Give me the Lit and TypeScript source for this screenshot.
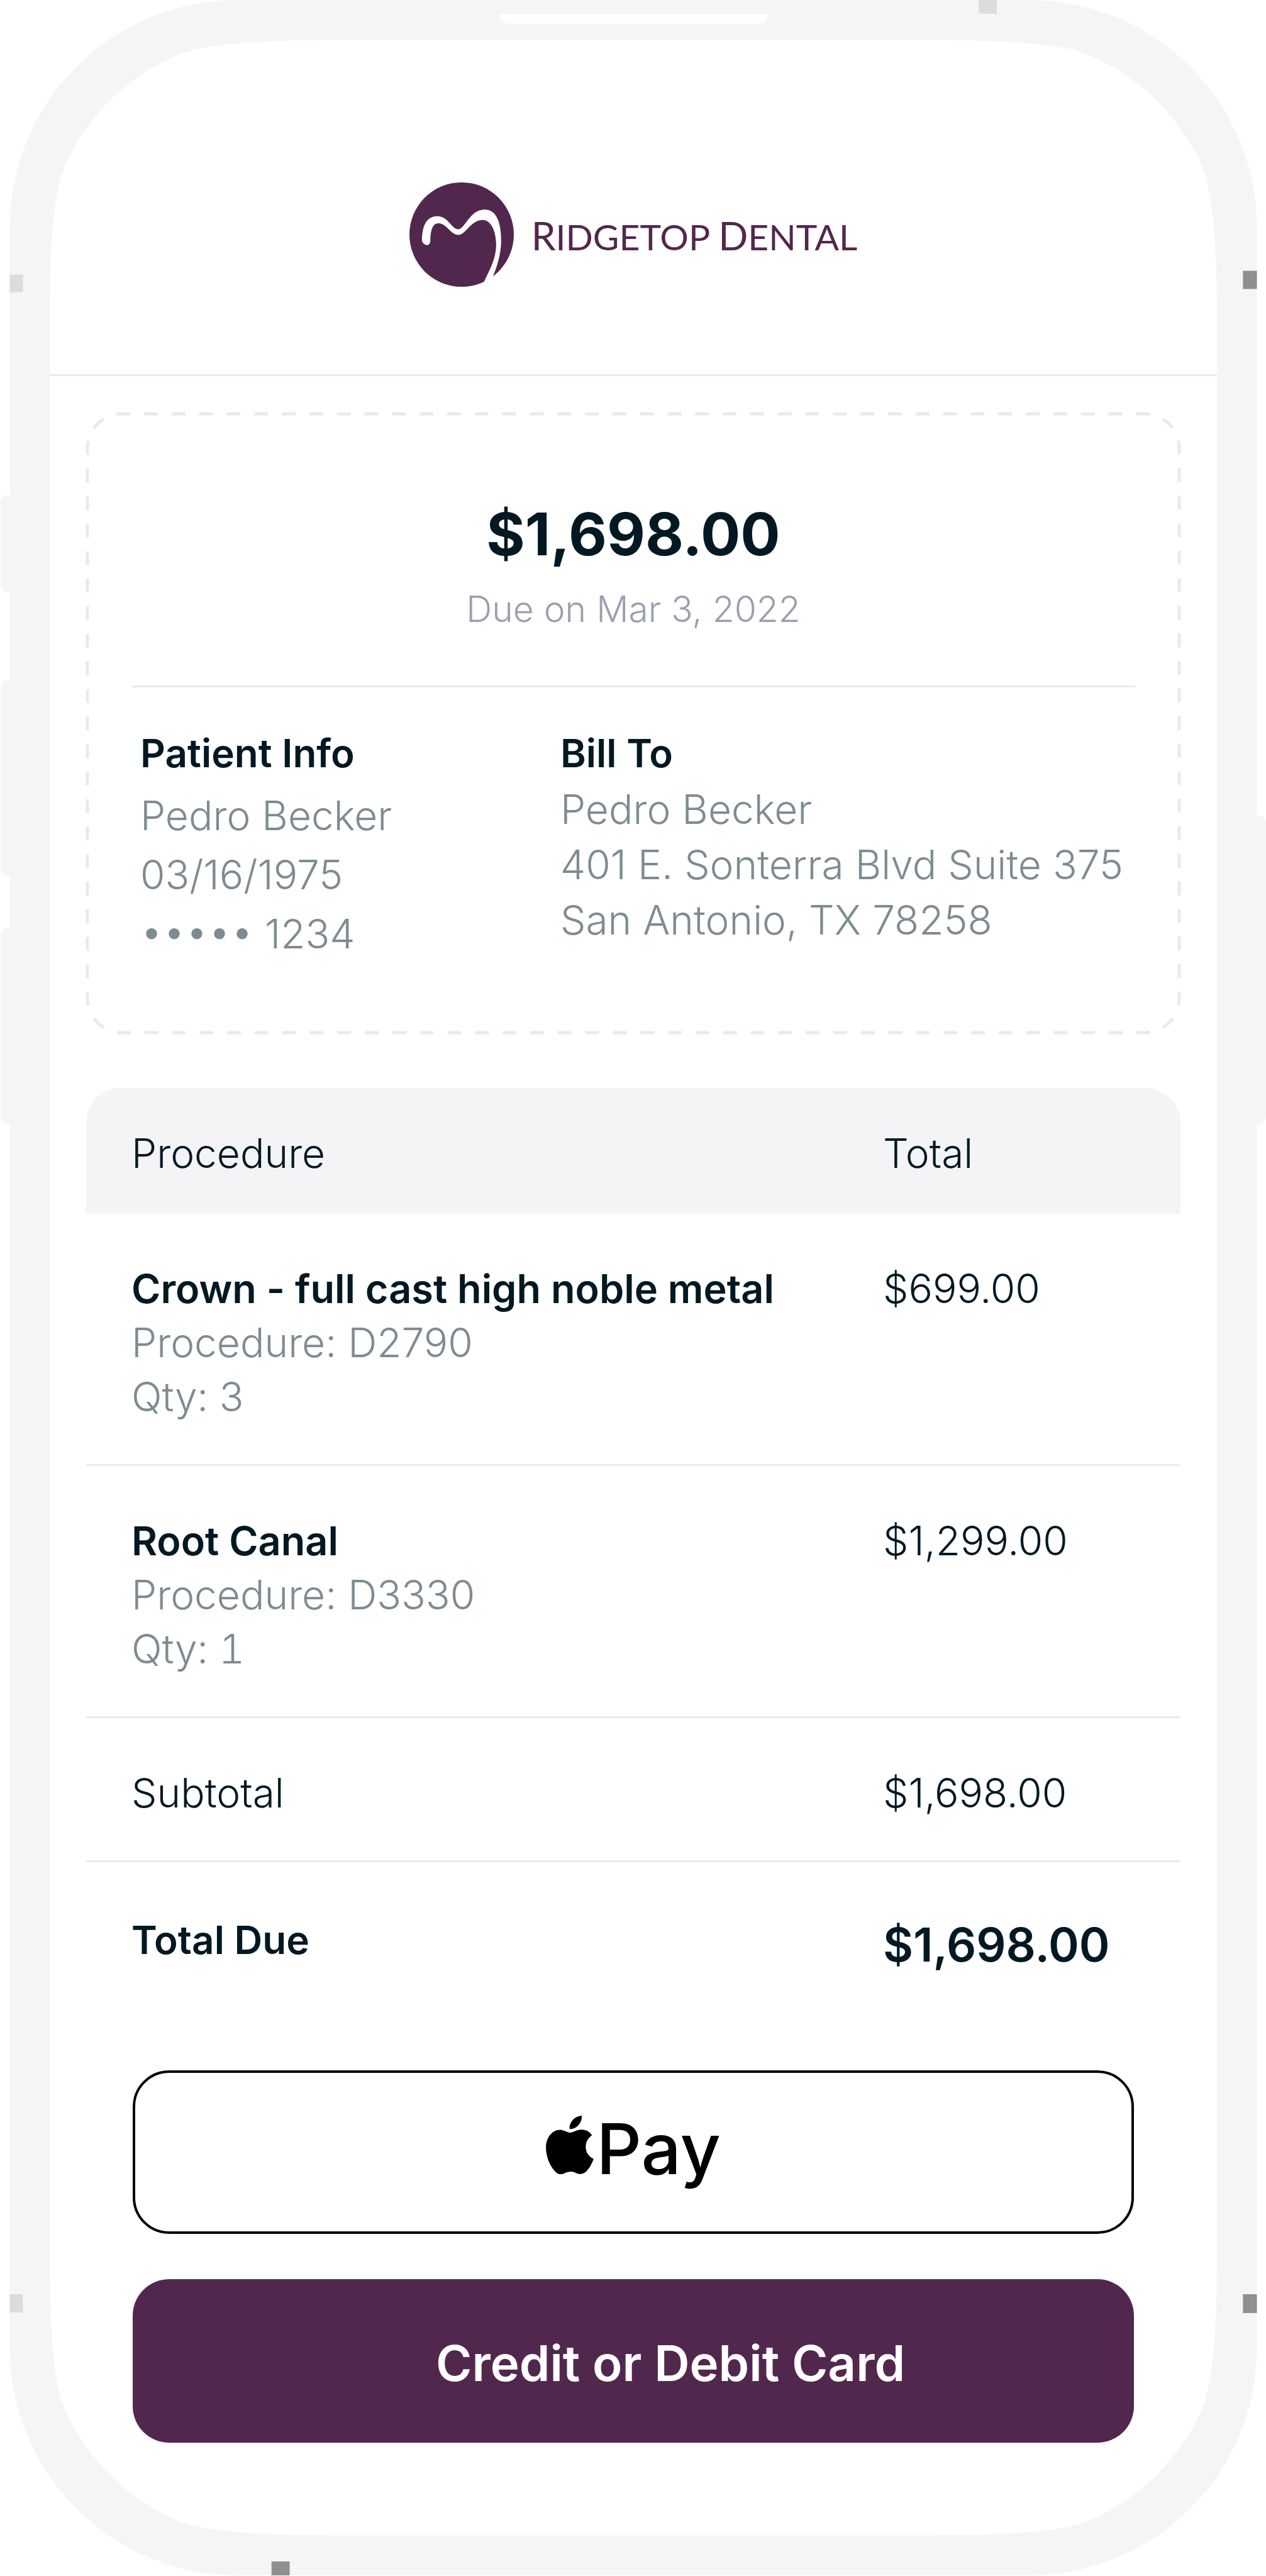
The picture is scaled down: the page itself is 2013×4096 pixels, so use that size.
import { LitElement, html, svg, css } from "lit";
import { customElement } from "lit/decorators.js";

interface Procedure {
  name: string;
  code: string;
  qty: number;
  total: string;
}

const PROCEDURES: Procedure[] = [
  { name: "Crown - full cast high noble metal", code: "D2790", qty: 3, total: "$699.00" },
  { name: "Root Canal", code: "D3330", qty: 1, total: "$1,299.00" },
];

const SCREEN_EDGE =
  "M82 540C82 390 88 310 113 260C150 188 214 121 302 87C348 72 430 66 560 66" +
  "H1530C1660 66 1742 72 1788 87C1876 121 1940 188 1977 260C2002 310 2008 390 2008 540" +
  "V3711C2008 3861 2002 3941 1977 3991C1940 4063 1876 4130 1788 4164C1742 4179 1660 4185 1530 4185" +
  "H560C430 4185 348 4179 302 4164C214 4130 150 4063 113 3991C88 3941 82 3861 82 3711Z";

/** The outline of the handset: side keys, body, earpiece and antenna bands. */
@customElement("phone-frame")
export class PhoneFrame extends LitElement {
  static styles = css`
    :host { display: block; }
    .art { display: block; width: 100%; height: 100%; }
    .key { fill: #f5f5f5; }
    .body { fill: #f5f5f5; }
    .screen { fill: #fff; }
    .band { fill: #dcdcdc; }
    .band-dark { fill: #8f8f8f; }
  `;

  render() {
    return html`
      <svg class="art" viewBox="0 0 2089 4251" preserveAspectRatio="none" aria-hidden="true">
        ${svg`
          <rect class="key" x="1" y="817" width="40" height="160" rx="12" />
          <rect class="key" x="1" y="1123" width="40" height="323" rx="12" />
          <rect class="key" x="1" y="1532" width="40" height="323" rx="12" />
          <rect class="key" x="2048" y="1347" width="41" height="508" rx="12" />
          <rect class="body" x="16" y="0" width="2058" height="4251" rx="376" />
          <path class="screen" d=${SCREEN_EDGE} />
          <path class="screen" d="M823 24H1267C1267 32 1262 39 1252 39H838C828 39 823 32 823 24Z" />
          <path class="band" d="M1615 0H1645V23L1615 22Z" />
          <path class="band" d="M16 453H38V482L16 483Z" />
          <path class="band" d="M16 3787H37L38 3817H16Z" />
          <path class="band-dark" d="M2051 447H2074V477H2051Z" />
          <path class="band-dark" d="M2051 3787H2074V3818H2051Z" />
          <path class="band-dark" d="M448 4228H478V4251H448Z" />
        `}
      </svg>
    `;
  }
}

@customElement("brand-logo")
export class BrandLogo extends LitElement {
  static styles = css`
    :host {
      display: flex;
      align-items: center;
      gap: 26px;
      color: #52274d;
    }
    .mark { display: block; width: 166px; height: 166px; }
    .disc { fill: #52274d; }
    .ridge { fill: #fff; }
    .name {
      font-family: Lato, "Open Sans", sans-serif;
      font-size: 57px;
      font-weight: 400;
      line-height: 72px;
      padding-top: 4px;
      padding-left: 2px;
      white-space: nowrap;
    }
    .initial { font-size: 62px; }
  `;

  render() {
    return html`
      <svg class="mark" viewBox="0 0 173 173" aria-hidden="true">
        <circle class="disc" cx="86.5" cy="86.5" r="86.5" />
        <path
          class="ridge"
          d="M20.8 96C20.8 80 24 56 46.7 56C64 56 70 77.7 81 77.7C92 77.7 100 45 124.8 45C146 45 152 70 152 97C152 120 144 143 137.7 157.7L137 178H116L123.3 166C132 146 143.7 128 143.7 103C143.7 85 137 62.3 121.3 62.3C102 62.3 93 87 81.5 87C68 87 62 67.7 47.7 67.7C37 67.7 34.7 84 34.7 97C34.7 101 32 104 29.5 104C25 104 20.8 100 20.8 96Z"
        />
      </svg>
      <span class="name"><span class="initial">R</span>IDGETOP <span class="initial">D</span>ENTAL</span>
    `;
  }
}

@customElement("bill-summary")
export class BillSummary extends LitElement {
  static styles = css`
    :host {
      display: block;
      position: relative;
      padding: 138px 72px 112px;
    }
    .outline {
      position: absolute;
      inset: 0;
      width: 100%;
      height: 100%;
      overflow: visible;
    }
    .dashes {
      x: 2px;
      y: 2px;
      width: calc(100% - 4px);
      height: calc(100% - 4px);
      fill: none;
      stroke: #e9eaee;
      stroke-width: 5px;
    }
    .amount {
      margin: 0;
      font-size: 94px;
      line-height: 110px;
      font-weight: 700;
      text-align: center;
    }
    .due {
      margin: 30px 0 0;
      font-size: 57px;
      line-height: 70px;
      text-align: center;
      color: #9aa0ae;
    }
    .rule {
      height: 3px;
      margin: 86px 0 0;
      border: 0;
      background: #e9eaee;
    }
    .parties {
      display: grid;
      grid-template-columns: 668fr 914fr;
      padding: 60px 0 0 14px;
    }
    .heading {
      margin: 0;
      font-size: 62px;
      line-height: 90px;
      font-weight: 600;
    }
    .lines {
      color: #7e8b92;
      line-height: 88px;
      white-space: nowrap;
    }
    .lines.loose {
      padding-top: 7px;
      line-height: 94px;
    }
  `;

  render() {
    return html`
      <svg class="outline" aria-hidden="true">
        <rect class="dashes" rx="55" pathLength="1220" stroke-dasharray="5" stroke-dashoffset="2" />
      </svg>
      <p class="amount">$1,698.00</p>
      <p class="due">Due on Mar 3, 2022</p>
      <hr class="rule" />
      <div class="parties">
        <section>
          <h2 class="heading">Patient Info</h2>
          <div class="lines loose">
            <div>Pedro Becker</div>
            <div>03/16/1975</div>
            <div>••••• 1234</div>
          </div>
        </section>
        <section>
          <h2 class="heading">Bill To</h2>
          <div class="lines">
            <div>Pedro Becker</div>
            <div>401 E. Sonterra Blvd Suite 375</div>
            <div>San Antonio, TX 78258</div>
          </div>
        </section>
      </div>
    `;
  }
}

@customElement("procedure-table")
export class ProcedureTable extends LitElement {
  static styles = css`
    :host { display: block; }
    .table {
      width: 100%;
      table-layout: fixed;
      border-collapse: separate;
      border-spacing: 0;
      text-align: left;
    }
    .total-col { width: 473px; }
    th, td {
      padding: 76px 0 64px;
      font-weight: 300;
      line-height: 86px;
      vertical-align: top;
      border-bottom: 3px solid #e9eaee;
    }
    th:first-child, td:first-child { padding-left: 72px; }
    thead th {
      padding: 61px 0 53px;
      background: #f4f4f7;
      border-bottom: 0;
    }
    thead th:first-child { border-top-left-radius: 55px; }
    thead th:last-child { border-top-right-radius: 55px; }
    .name {
      font-size: 63px;
      font-weight: 600;
    }
    .meta { color: #7e8b92; }
    .qty { font-variant-numeric: tabular-nums; }
    .due th, .due td {
      padding-top: 81px;
      padding-bottom: 0;
      border-bottom: 0;
    }
    .due th {
      font-size: 62px;
      font-weight: 600;
    }
    .due td {
      font-size: 74px;
      line-height: 100px;
      font-weight: 600;
    }
  `;

  render() {
    return html`
      <table class="table">
        <colgroup>
          <col />
          <col class="total-col" />
        </colgroup>
        <thead>
          <tr><th scope="col">Procedure</th><th scope="col">Total</th></tr>
        </thead>
        <tbody>
          ${PROCEDURES.map(
            (p) => html`
              <tr>
                <td>
                  <div class="name">${p.name}</div>
                  <div class="meta">Procedure: ${p.code}</div>
                  <div class="meta qty">Qty: ${p.qty}</div>
                </td>
                <td>${p.total}</td>
              </tr>
            `,
          )}
        </tbody>
        <tfoot>
          <tr><th scope="row">Subtotal</th><td>$1,698.00</td></tr>
          <tr class="due"><th scope="row">Total Due</th><td>$1,698.00</td></tr>
        </tfoot>
      </table>
    `;
  }
}

@customElement("pay-actions")
export class PayActions extends LitElement {
  static styles = css`
    :host {
      display: flex;
      flex-direction: column;
      gap: 72px;
      padding: 0 74px;
    }
    .button {
      display: flex;
      align-items: center;
      justify-content: center;
      box-sizing: border-box;
      height: 260px;
      margin: 0;
      border: 0;
      border-radius: 58px;
      font-family: inherit;
      cursor: pointer;
    }
    .apple {
      gap: 4px;
      padding: 0 0 12px;
      border: 4px solid #000;
      background: #fff;
      color: #000;
      font-size: 112px;
      line-height: 120px;
      font-weight: 500;
    }
    .fruit { display: block; width: 76px; height: 104px; }
    .card {
      padding: 8px 0 0 118px;
      background: #52274d;
      color: #fff;
      font-size: 78px;
      line-height: 96px;
      font-weight: 600;
    }
  `;

  render() {
    return html`
      <button class="button apple" type="button" aria-label="Apple Pay">
        <svg class="fruit" viewBox="0 0 236 324" aria-hidden="true">
          <path d="M177 0C179 18 171 36 160 48C149 60 133 67 117 66C115 49 123 32 133 21C144 9 162 1 177 0Z" />
          <path
            d="M228 97C226 99 197 115 197 154C197 198 234 213 236 214C235 216 229 235 216 256C203 274 190 289 170 289C150 289 145 277 122 277C100 277 92 290 73 290C54 290 41 273 27 252C11 228 0 191 0 158C0 104 35 70 70 70C89 70 104 84 119 84C134 84 151 69 176 69C186 69 212 71 228 97Z"
          />
        </svg>
        <span>Pay</span>
      </button>
      <button class="button card" type="button">Credit or Debit Card</button>
    `;
  }
}

@customElement("app-root")
export class AppRoot extends LitElement {
  static styles = css`
    :host {
      display: block;
      position: relative;
      background: #fff;
      color: #021823;
      font-family: Inter, "Liberation Sans", sans-serif;
      font-size: 64px;
      font-weight: 300;
    }
    .frame {
      position: absolute;
      inset: 0;
    }
    .screen {
      position: relative;
      padding: 0 78px 211px 79px;
    }
    .header {
      display: flex;
      justify-content: center;
      padding: 290px 0 139px;
      border-bottom: 3px solid #e9eaee;
    }
    .content {
      display: flex;
      flex-direction: column;
      padding: 58px 58px 0;
    }
    .procedures { margin-top: 86px; }
    .actions { margin-top: 150px; }
  `;

  render() {
    return html`
      <phone-frame class="frame"></phone-frame>
      <div class="screen">
        <header class="header"><brand-logo></brand-logo></header>
        <main class="content">
          <bill-summary></bill-summary>
          <procedure-table class="procedures"></procedure-table>
          <pay-actions class="actions"></pay-actions>
        </main>
      </div>
    `;
  }
}
